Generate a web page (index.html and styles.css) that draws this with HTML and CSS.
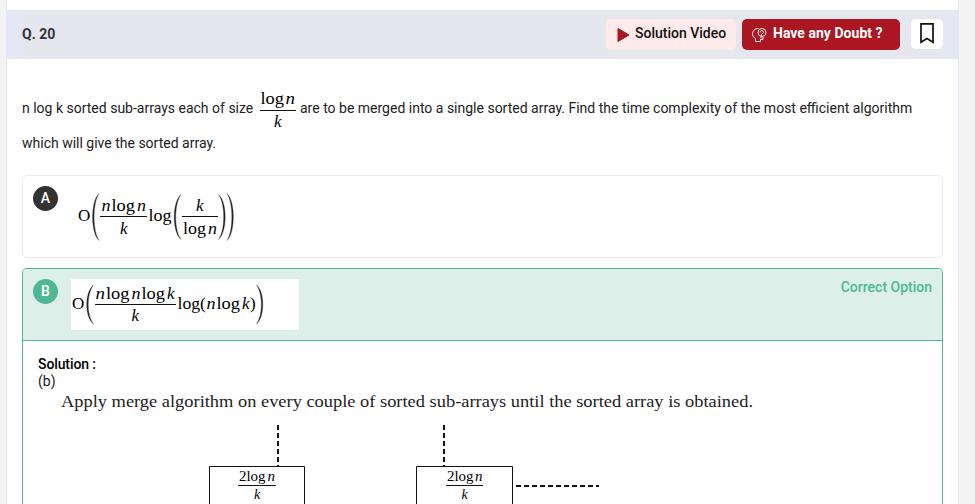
FILE: index.html
```html
<!DOCTYPE html>
<html lang="en">
<head>
<meta charset="utf-8">
<title>Q. 20</title>
<link rel="stylesheet" href="styles.css">
</head>
<body>
<main class="page">
  <header class="bar">
    <h1 class="number">Q. 20</h1>
    <div class="actions">
      <button class="btn video"><svg class="play" width="13" height="16" viewBox="0 0 13 16"><path d="M1 1.500L12 8 1 14.500Z"/></svg>Solution Video</button>
      <button class="btn doubt"><svg class="head" width="16" height="16" viewBox="0 0 16 16"><path d="M7.500 1.500C3.500 1.500 1.500 4 1.500 7.500Q1.500 10 4.500 11.500V14.500H9.500V12.500H12V10"/><circle cx="11" cy="5.500" r="4"/><path d="M9 5.500C9 3 13 3 12.500 5.500Q12 6.500 10.500 7L10 11.500"/></svg>Have any Doubt ?</button>
      <button class="mark" aria-label="Bookmark"><svg width="16" height="22" viewBox="0 0 16 22"><path d="M2 1.800H14V20.200L8 16.600 2 20.200Z"/></svg></button>
    </div>
  </header>
  <p class="question"><span class="lead">n log k sorted sub-arrays each of size</span>
    <svg class="math size" width="38" height="42" viewBox="259 90 38 42"><text x="260.500" y="104.500" textLength="23.500" lengthAdjust="spacingAndGlyphs">log</text><text class="i" x="285.500" y="104.500" textLength="9.500" lengthAdjust="spacingAndGlyphs">n</text><path d="M260 111.500H296"/><text class="i" x="274" y="127.500">k</text></svg>
    <span class="rest">are to be merged into a single sorted array. Find the time complexity of the most efficient algorithm</span>
    <span class="second">which will give the sorted array.</span></p>
  <section class="option">
    <span class="letter">A</span>
    <svg class="math formula-a" width="170" height="60" viewBox="71 186 170 60">
      <text x="78" y="221">O</text>
      <path class="paren" d="M99 193.500C90.500 201 90.500 233 99 240.500C92.500 231 92.500 203 99 193.500Z"/>
      <text class="i" x="101.500" y="210.500" textLength="9" lengthAdjust="spacingAndGlyphs">n</text><text x="111.500" y="210.500" textLength="23.500" lengthAdjust="spacingAndGlyphs">log</text><text class="i" x="137" y="210.500" textLength="9" lengthAdjust="spacingAndGlyphs">n</text>
      <path d="M100 216.500H147"/><text class="i" x="120" y="234">k</text>
      <text x="148.500" y="221" textLength="23" lengthAdjust="spacingAndGlyphs">log</text>
      <path class="paren" d="M181 194.500C172 202 172 232 181 239.500C174 230 174 204 181 194.500Z"/>
      <text class="i" x="196" y="211">k</text><path d="M182 216.500H218"/>
      <text x="183" y="234" textLength="23" lengthAdjust="spacingAndGlyphs">log</text><text class="i" x="208" y="234" textLength="9" lengthAdjust="spacingAndGlyphs">n</text>
      <path class="paren" d="M218.500 194.500C227.500 202 227.500 232 218.500 239.500C225.500 230 225.500 204 218.500 194.500ZM227 193.500C235.500 201 235.500 233 227 240.500C233.500 231 233.500 203 227 193.500Z"/>
    </svg>
  </section>
  <section class="option correct">
    <div class="answer">
      <span class="letter">B</span>
      <svg class="math formula-b" width="228" height="51" viewBox="71 279 228 51">
        <text x="72" y="309">O</text>
        <path class="paren" d="M93.500 285C84.500 292 84.500 317 93.500 324C86.500 315 86.500 294 93.500 285Z"/>
        <text class="i" x="95.500" y="298.500" textLength="9.500" lengthAdjust="spacingAndGlyphs">n</text><text x="106" y="298.500" textLength="23.500" lengthAdjust="spacingAndGlyphs">log</text><text class="i" x="131.500" y="298.500" textLength="9" lengthAdjust="spacingAndGlyphs">n</text><text x="141.500" y="298.500" textLength="23.500" lengthAdjust="spacingAndGlyphs">log</text><text class="i" x="167" y="298.500">k</text>
        <path d="M95 304.500H176"/><text class="i" x="131.500" y="321">k</text>
        <text x="177.500" y="309" textLength="28.500" lengthAdjust="spacingAndGlyphs">log(</text><text class="i" x="206.500" y="309" textLength="9" lengthAdjust="spacingAndGlyphs">n</text><text x="216.500" y="309" textLength="23.500" lengthAdjust="spacingAndGlyphs">log</text><text class="i" x="242" y="309">k</text><text x="250" y="309">)</text>
        <path class="paren" d="M256.500 285C265 292 265 317 256.500 324C263 315 263 294 256.500 285Z"/>
      </svg>
      <span class="status">Correct Option</span>
    </div>
    <div class="solution">
      <h2 class="heading">Solution :</h2>
      <div class="key">(b)</div>
      <svg class="math figure" width="850" height="105" viewBox="38 399 850 105">
        <text class="sentence" x="61" y="407" textLength="692" lengthAdjust="spacingAndGlyphs">Apply merge algorithm on every couple of sorted sub-arrays until the sorted array is obtained.</text>
        <path class="dash" d="M278 425V466M444 425V466M516 486H599"/>
        <path d="M209.500 512V466.500H304.500V512M416.500 512V466.500H512.500V512"/>
        <g class="small"><text x="239" y="480.500" textLength="26.500" lengthAdjust="spacingAndGlyphs">2log</text><text class="i" x="267.500" y="480.500" textLength="7.500" lengthAdjust="spacingAndGlyphs">n</text><path d="M238 485.500H276"/><text class="i" x="254" y="499">k</text>
        <text x="447" y="480.500" textLength="26.500" lengthAdjust="spacingAndGlyphs">2log</text><text class="i" x="475" y="480.500" textLength="7.500" lengthAdjust="spacingAndGlyphs">n</text><path d="M446 485.500H483"/><text class="i" x="461.500" y="499">k</text></g>
      </svg>
    </div>
  </section>
</main>
</body>
</html>
```

FILE: styles.css
```css
* { box-sizing: border-box; }
html { overflow: hidden; background: #f3f3f3; }
body { margin: 0; height: 504px; overflow: hidden; font: 14px/18px Roboto, sans-serif; color: #212121; }
.page { width: 953px; height: 504px; overflow: hidden; margin-left: 6px; padding-top: 10px; border: solid #e4e7f4; border-width: 0 1px; background: #fff; }
.bar { display: flex; align-items: center; justify-content: space-between; height: 49px; padding: 0 15px; background: linear-gradient(90deg, #e4e7f4 15px, #e4e7ee 15px calc(100% - 15px), #e4e7f4 calc(100% - 15px)); }
.number { margin: 0 0 2px; font-size: 14px; font-weight: 700; color: #333; }
.actions { display: flex; align-items: center; height: 31px; margin-bottom: 1px; }
.btn { display: flex; align-items: center; height: 31px; border: 0; border-radius: 5px; font: 500 14px Roboto, sans-serif; white-space: nowrap; }
.video { width: 130px; margin-right: 6px; padding: 0 0 2px 11px; gap: 5px; background: #fdeaea; color: #111; }
.play { fill: #ac1620; stroke: #ac1620; stroke-linejoin: round; margin-top: 3px; }
.doubt { width: 158px; margin-right: 11px; padding: 0 0 2px 9px; gap: 6px; background: #ac1620; color: #fff; font-weight: 700; letter-spacing: .03px; }
.head { fill: none; stroke: #fff; stroke-width: .9; margin-top: 3px; }
.mark { display: grid; place-items: center; width: 32px; height: 30px; margin-bottom: 1px; padding: 0 0 2px; border: 0; border-radius: 5px; background: #fff; }
.mark path { fill: none; stroke: #111; stroke-width: 1.7; }
.question { display: flex; flex-wrap: wrap; align-items: center; margin: 29px 15px 0; height: 87px; align-content: flex-start; white-space: nowrap; }
.lead { width: 237px; }
.rest { margin-left: 3px; }
.second { width: 100%; margin-top: 3px; }
.lead, .rest { margin-top: -4px; }
.size { margin-top: 1px; }
.math { display: block; flex: none; font: 17px "Liberation Serif", serif; fill: #000; }
.math path { fill: none; stroke: #111; stroke-width: 1; }
.math .paren { fill: #222; stroke: #222; stroke-width: .3; }
.math .i { font-style: italic; }
.option { display: flex; align-items: flex-start; width: 921px; height: 83px; margin: 0 15px 10px; padding: 10px; border: 1px solid #e9e9e9; border-radius: 5px; }
.letter { display: grid; place-items: center; width: 25px; height: 25px; padding-bottom: 1px; border-radius: 50%; background: #333; color: #fff; font-weight: 500; }
.formula-a { margin-left: 13px; }
.correct { display: block; height: 236px; margin-bottom: 0; padding: 0; border-color: #4db893; border-bottom: 0; border-radius: 5px 5px 0 0; overflow: hidden; }
.answer { display: flex; align-items: flex-start; height: 72px; padding: 10px; background: #dcf0e9; border-bottom: 1px solid #4db893; }
.correct .letter { background: #4db893; }
.formula-b { margin-left: 13px; background: #fff; }
.status { margin: -1px 0 0 auto; font-weight: 500; color: #4db893; }
.solution { padding: 15px 15px 0; }
.heading { margin: 0; font-size: 14px; line-height: 17px; font-weight: 500; letter-spacing: -.1px; color: #000; }
.key { height: 17px; line-height: 17px; }
.figure { margin-top: 9px; overflow: visible; }
.math .dash { stroke-width: 2; stroke-dasharray: 5 3; }
.small { font-size: 14px; }
.math .sentence { font: 17px "Liberation Serif", serif; fill: #222; }
```
